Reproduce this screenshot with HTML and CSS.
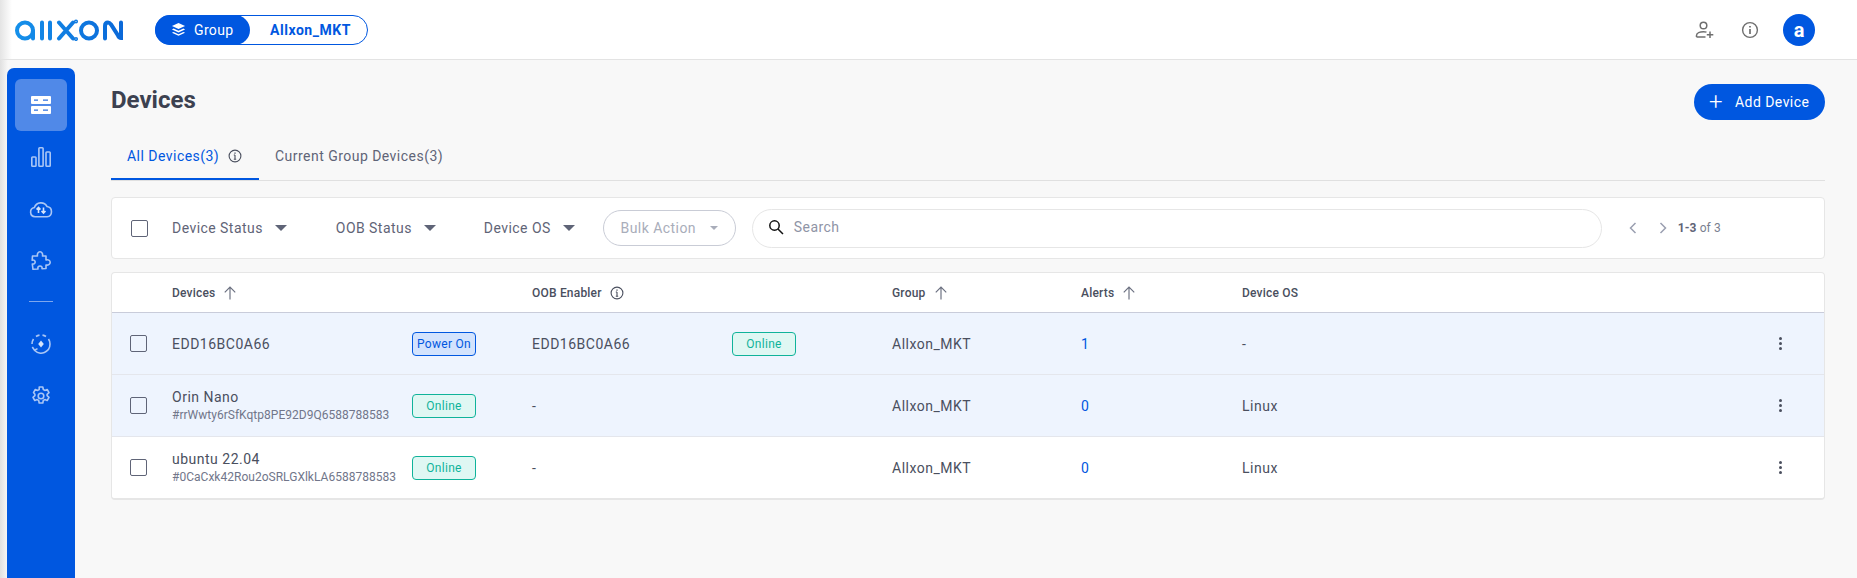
FILE: index.html
```html
<!DOCTYPE html>
<html lang="en">
<head>
    <meta charset="UTF-8">
    <title>Devices</title>
    <link rel="stylesheet" href="styles.css">
</head>
<body>
    <header class="top-bar">
        <svg class="logo" viewBox="0 0 108 22" fill="none" stroke="url(#logoFade)" stroke-width="4" stroke-linecap="round">
            <defs>
                <linearGradient id="logoFade" gradientUnits="userSpaceOnUse" x1="0" y1="0" x2="108" y2="0">
                    <stop offset="0" stop-color="#1590ea"/>
                    <stop offset="1" stop-color="#0a68d8"/>
                </linearGradient>
            </defs>
            <rect x="2" y="3.500" width="16" height="16" rx="8"/>
            <path d="M18 12v7.500M27 3.500v16M35 3.500v16"/>
            <path d="M44 3.500l14 16M58 3.500l-14 16"/>
            <circle cx="61" cy="2.500" r="1.300" stroke-width="1.500"/>
            <circle cx="61" cy="20" r="1.300" stroke-width="1.500"/>
            <rect x="66" y="3.500" width="16" height="16" rx="8"/>
            <path d="M90 19.500V7q0-3.500 3-3.500q1.500 0 3 2l7 11q1 2.500 3 2.500V3.500"/>
        </svg>
        <div class="group-pill">
            <div class="group-label">
                <svg class="group-icon" viewBox="0 0 16 16" fill="#fff"><path d="M8 1l7 3.200-7 3.200-7-3.200z"/><path d="M2.800 7l5.200 2.400L13.200 7 15 7.900l-7 3.200-7-3.200z"/><path d="M2.800 10.600L8 13l5.200-2.400 1.800.9L8 14.700 1 11.500z"/></svg>
                Group
            </div>
            <div class="group-name">Allxon_MKT</div>
        </div>
        <div class="top-actions">
            <svg class="top-icon" viewBox="0 0 20 20" fill="none" stroke="#6f6f6f" stroke-width="1.500"><circle cx="8.500" cy="5.500" r="3.300"/><path d="M1.500 17v-1.500c0-2.500 3.500-3.800 7-3.800 1 0 2 .1 3 .4M1.500 17h9M15 11.500v6.500M11.800 14.800h6.500"/></svg>
            <svg class="top-icon info-top" viewBox="0 0 20 20" fill="none" stroke="#6f6f6f" stroke-width="1.400"><circle cx="10" cy="10" r="7.400"/><path d="M10 9v5M10 6v1.400" stroke-width="1.700"/></svg>
            <div class="avatar">a</div>
        </div>
    </header>

    <div class="page">
        <nav class="side-nav">
            <div class="nav-item active">
                <svg viewBox="0 0 20 18" fill="#fff"><rect x="0" y="0" width="20" height="8" rx="1"/><rect x="0" y="10" width="20" height="8" rx="1"/><path d="M3 3.500h4v1.200H3zM12 3.500h5v1.200h-5zM3 13.500h4v1.200H3zM12 13.500h5v1.200h-5z" fill="#2f72e0"/></svg>
            </div>
            <div class="nav-item">
                <svg viewBox="0 0 20 20" fill="none" stroke="#a9c6f5" stroke-width="1.600"><rect x=".8" y="10" width="4.200" height="9.200" rx=".8"/><rect x="7.900" y=".8" width="4.200" height="18.400" rx=".8"/><rect x="15" y="5" width="4.200" height="14.200" rx=".8"/></svg>
            </div>
            <div class="nav-item">
                <svg class="wide" viewBox="0 0 24 18" fill="none" stroke="#a9c6f5" stroke-width="1.600"><path d="M6 16.800a4.700 4.700 0 0 1-.6-9.300A6.900 6.900 0 0 1 18 6.500a5.200 5.200 0 0 1 0 10.300z"/><path d="M9.500 13V7.500M7.500 9.500l2-2 2 2M14.500 7.500V13M12.500 11l2 2 2-2" stroke="#d5e4fb"/></svg>
            </div>
            <div class="nav-item">
                <svg viewBox="0 0 20 20" fill="none" stroke="#a9c6f5" stroke-width="1.600" stroke-linejoin="round"><path d="M1.500 5h5C6 3 7 .8 9 .8s3 2.200 2.500 4.200H15v4c2-.7 4.200.3 4.200 2.300S17 14.500 15 14v3.500l-4 .3c.4-1.700-.5-2.800-2-2.800s-2.500 1.200-2 3l-5 .3-.7-5.300c1.700.3 2.900-.6 2.900-2s-1.400-2.300-3-1.800z"/></svg>
            </div>
            <div class="nav-divider"></div>
            <div class="nav-item">
                <svg viewBox="0 0 20 20" fill="none" stroke="#a9c6f5" stroke-width="1.600"><path d="M1 10a9 9 0 0 1 1.500-5M5 2.500A9 9 0 0 1 8.500 1.100M11.500 1.100A9 9 0 0 1 15 2.500M17.500 5A9 9 0 0 1 19 10M19 10a9 9 0 0 1-15.500 6.300"/><path d="M1.300 13l2.200 3.300 3-1.700"/><path d="M10 6.500l2.800 3.500L10 13.500 7.200 10z" fill="#d5e4fb" stroke="none"/></svg>
            </div>
            <div class="nav-item">
                <svg viewBox="0 0 20 20" fill="none" stroke="#a9c6f5" stroke-width="1.600" stroke-linejoin="round"><circle cx="10" cy="10" r="2.800"/><path d="M8.200 1h3.600l.5 2.500 1.500.9 2.400-.9 1.800 3.100-1.900 1.700v1.400l1.900 1.700-1.800 3.100-2.400-.9-1.500.9-.5 2.500H8.200l-.5-2.500-1.500-.9-2.400.9-1.800-3.100 1.900-1.700V8.300L2.500 6.600l1.800-3.100 2.400.9 1.500-.9z"/></svg>
            </div>
        </nav>

        <main class="content">
            <div class="title-row">
                <h1>Devices</h1>
                <button class="add-button"><span class="plus">+</span>Add Device</button>
            </div>

            <div class="tabs">
                <div class="tab active">All Devices(3)
                    <svg class="info" viewBox="0 0 14 14" fill="none" stroke="#4a4f5e" stroke-width="1.100"><circle cx="7" cy="7" r="5.900"/><path d="M7 6v4.200M5.800 10.200h2.400M5.800 6h1.200"/><path d="M7 3.500v1.200" stroke-width="1.300"/></svg>
                </div>
                <div class="tab">Current Group Devices(3)</div>
            </div>

            <div class="filter-bar">
                <span class="check"></span>
                <div class="filter filter-status">Device Status <i class="caret"></i></div>
                <div class="filter filter-oob">OOB Status <i class="caret"></i></div>
                <div class="filter filter-os">Device OS <i class="caret"></i></div>
                <div class="bulk">Bulk Action <i class="caret small"></i></div>
                <div class="search">
                    <svg viewBox="0 0 16 16" fill="none" stroke="#111" stroke-width="1.500"><circle cx="6.500" cy="6.500" r="4.700"/><path d="M10 10l5 5"/></svg>
                    Search
                </div>
                <div class="pager">
                    <svg viewBox="0 0 10 14" fill="none" stroke="#9a9fb0" stroke-width="1.500"><path d="M7.500 2L2.500 7l5 5"/></svg>
                    <svg viewBox="0 0 10 14" fill="none" stroke="#9a9fb0" stroke-width="1.500"><path d="M2.500 2l5 5-5 5"/></svg>
                    <span class="count"><b>1-3</b> of 3</span>
                </div>
            </div>

            <div class="table">
                <div class="row head">
                    <span></span>
                    <div class="th">Devices <svg class="sort" viewBox="0 0 12 12" fill="none" stroke="#6b7080" stroke-width="1"><path d="M6 11.500V1M1.500 5.500L6 1l4.500 4.500"/></svg></div>
                    <span></span>
                    <div class="th">OOB Enabler <svg class="info" viewBox="0 0 14 14" fill="none" stroke="#4a4f5e" stroke-width="1.100"><circle cx="7" cy="7" r="5.900"/><path d="M7 6v4.200M5.800 10.200h2.400M5.800 6h1.200"/><path d="M7 3.500v1.200" stroke-width="1.300"/></svg></div>
                    <span></span>
                    <div class="th">Group <svg class="sort" viewBox="0 0 12 12" fill="none" stroke="#6b7080" stroke-width="1"><path d="M6 11.500V1M1.500 5.500L6 1l4.500 4.500"/></svg></div>
                    <div class="th">Alerts <svg class="sort" viewBox="0 0 12 12" fill="none" stroke="#6b7080" stroke-width="1"><path d="M6 11.500V1M1.500 5.500L6 1l4.500 4.500"/></svg></div>
                    <div class="th">Device OS</div>
                    <span></span>
                </div>

                <div class="row selected">
                    <span class="check"></span>
                    <div class="name">EDD16BC0A66</div>
                    <div><span class="badge power">Power On</span></div>
                    <div>EDD16BC0A66</div>
                    <div><span class="badge online">Online</span></div>
                    <div>Allxon_MKT</div>
                    <div class="alerts">1</div>
                    <div>-</div>
                    <div class="kebab"><i></i><i></i><i></i></div>
                </div>

                <div class="row selected">
                    <span class="check"></span>
                    <div class="name">Orin Nano<small>#rrWwty6rSfKqtp8PE92D9Q6588788583</small></div>
                    <div><span class="badge online">Online</span></div>
                    <div>-</div>
                    <span></span>
                    <div>Allxon_MKT</div>
                    <div class="alerts">0</div>
                    <div>Linux</div>
                    <div class="kebab"><i></i><i></i><i></i></div>
                </div>

                <div class="row">
                    <span class="check"></span>
                    <div class="name">ubuntu 22.04<small>#0CaCxk42Rou2oSRLGXlkLA6588788583</small></div>
                    <div><span class="badge online">Online</span></div>
                    <div>-</div>
                    <span></span>
                    <div>Allxon_MKT</div>
                    <div class="alerts">0</div>
                    <div>Linux</div>
                    <div class="kebab"><i></i><i></i><i></i></div>
                </div>
            </div>
        </main>
    </div>
</body>
</html>
```

FILE: styles.css
```css
* {
    box-sizing: border-box;
}

html, body {
    height: 100%;
}

body {
    margin: 0;
    background: #f8f8f8;
    font-family: "Roboto", sans-serif;
    font-size: 14px;
    color: #4a4f5e;
    overflow: hidden;
    display: flex;
    flex-direction: column;
}

.top-bar {
    height: 60px;
    flex: none;
    background: linear-gradient(90deg, #e4e4e4, #fff 12px);
    border-bottom: 1px solid #e3e3e3;
    display: flex;
    align-items: center;
    padding: 0 42px 0 15px;
}

.logo {
    width: 108px;
    height: 22px;
}

.group-pill {
    margin-left: 32px;
    width: 213px;
    height: 30px;
    border: 1px solid #0057e0;
    border-radius: 15px;
    display: flex;
    align-items: center;
    background: #fff;
}

.group-label {
    width: 95px;
    height: 30px;
    margin-left: -1px;
    background: #0057e0;
    border-radius: 15px;
    color: #fff;
    display: flex;
    align-items: center;
    gap: 8px;
    padding-left: 16px;
    letter-spacing: 0.35px;
}

.group-icon {
    width: 15px;
    height: 15px;
}

.group-name {
    flex: 1;
    padding-left: 4px;
    text-align: center;
    color: #0057e0;
    font-weight: 700;
    letter-spacing: 0.55px;
}

.top-actions {
    margin-left: auto;
    display: flex;
    align-items: center;
    gap: 23px;
}

.info-top {
    margin-left: 2px;
}

.top-icon {
    width: 20px;
    height: 20px;
}

.avatar {
    width: 32px;
    height: 32px;
    border-radius: 50%;
    background: #0057e0;
    color: #fff;
    font-size: 20px;
    font-weight: 700;
    display: flex;
    align-items: center;
    justify-content: center;
}

.page {
    flex: 1;
    display: flex;
    min-height: 0;
    background: linear-gradient(90deg, #e0e0e0, #f8f8f8 8px);
    padding-left: 7px;
    padding-top: 8px;
}

.side-nav {
    width: 68px;
    flex: none;
    background: #0057e0;
    border-radius: 7px 7px 0 0;
    padding-top: 11px;
    display: flex;
    flex-direction: column;
    align-items: center;
}

.nav-item {
    width: 52px;
    height: 52px;
    flex: none;
    border-radius: 6px;
    display: flex;
    align-items: center;
    justify-content: center;
}

.nav-item.active {
    background: #5089e8;
}

.nav-item svg {
    width: 20px;
    height: 20px;
}

.nav-item svg.wide {
    width: 24px;
    height: 18px;
}

.nav-divider {
    width: 24px;
    height: 1px;
    background: #7ea7ee;
    margin: 14px 0 16px;
    flex: none;
}

.content {
    flex: 1;
    padding: 16px 32px 0 36px;
    min-width: 0;
}

.title-row {
    display: flex;
    justify-content: space-between;
    align-items: center;
    height: 36px;
}

h1 {
    margin: 0;
    padding-bottom: 4px;
    font-size: 24px;
    font-weight: 700;
    color: #3c4150;
}

.add-button {
    width: 131px;
    height: 36px;
    border: none;
    border-radius: 18px;
    background: #0057e0;
    color: #fff;
    font-family: inherit;
    font-size: 14px;
    letter-spacing: 0.45px;
    display: flex;
    align-items: center;
    padding: 0 0 0 15px;
}

.plus {
    font-size: 24px;
    font-weight: 300;
    line-height: 20px;
    margin-right: 12px;
}

.tabs {
    display: flex;
    margin-top: 15px;
    height: 46px;
    border-bottom: 1px solid #e0e0e0;
}

.tab {
    padding: 0 16px 3px;
    height: 45px;
    display: flex;
    align-items: center;
    gap: 9px;
    letter-spacing: 0.47px;
    color: #5f6477;
}

.tab.active {
    color: #0057e0;
    border-bottom: 2px solid #0057e0;
    width: 148px;
    padding-bottom: 1px;
}

.info {
    width: 14px;
    height: 14px;
    flex: none;
}

.filter-bar {
    margin-top: 16px;
    height: 62px;
    background: #fff;
    border: 1px solid #e6e6e6;
    border-radius: 4px;
    display: flex;
    align-items: center;
    padding-left: 19px;
    color: #5f6477;
    letter-spacing: 0.45px;
}

.check {
    width: 17px;
    height: 17px;
    border: 1.5px solid #5f6477;
    border-radius: 2px;
    display: block;
    flex: none;
}

.filter {
    display: flex;
    align-items: center;
    gap: 12px;
}

.filter-status {
    margin-left: 24px;
}

.filter-oob {
    margin-left: 49px;
}

.filter-os {
    margin-left: 48px;
}

.caret {
    display: block;
    width: 0;
    height: 0;
    border-left: 6px solid transparent;
    border-right: 6px solid transparent;
    border-top: 6px solid #5f6477;
}

.caret.small {
    border-left-width: 4px;
    border-right-width: 4px;
    border-top-width: 4px;
    border-top-color: #a9adba;
}

.bulk {
    margin-left: 28px;
    width: 133px;
    height: 36px;
    border: 1px solid #c9ccd6;
    border-radius: 18px;
    display: flex;
    align-items: center;
    justify-content: center;
    gap: 14px;
    color: #a9adba;
}

.search {
    margin-left: 16px;
    width: 850px;
    height: 39px;
    border: 1px solid #e6e6e6;
    border-radius: 20px;
    display: flex;
    align-items: center;
    gap: 10px;
    padding: 0 0 2px 15px;
    color: #8f94a6;
}

.search svg {
    width: 16px;
    height: 16px;
}

.pager {
    margin-left: 26px;
    display: flex;
    align-items: center;
    gap: 20px;
}

.pager svg {
    width: 10px;
    height: 14px;
}

.count {
    font-size: 12px;
    margin-left: -10px;
    color: #7a7f90;
    letter-spacing: 0.1px;
}

.count b {
    color: #5f6477;
}

.table {
    margin-top: 13px;
    background: #fff;
    border: 1px solid #e6e6e6;
    border-bottom-width: 2px;
    border-radius: 4px;
}

.row {
    display: grid;
    grid-template-columns: 60px 240px 120px 200px 160px 189px 161px 1fr 88px;
    align-items: center;
    height: 62px;
    border-top: 1px solid #e4e6ec;
    letter-spacing: 0.5px;
    color: #4a4f5e;
}

.row > .check {
    margin-left: 18px;
}

.row.head {
    height: 40px;
    border-top: none;
    border-bottom: 1px solid #c9ccda;
}

.row.head + .row {
    border-top: none;
    height: 61px;
}

.row.selected {
    background: #eef4fe;
}

.th {
    font-size: 12px;
    font-weight: 500;
    display: flex;
    align-items: center;
    gap: 8px;
    letter-spacing: 0.2px;
}

.sort {
    width: 14px;
    height: 14px;
}

.name small {
    display: block;
    font-size: 12px;
    color: #71768a;
    margin-top: 3px;
    letter-spacing: 0.02px;
}

.badge {
    display: flex;
    align-items: center;
    justify-content: center;
    width: 64px;
    height: 24px;
    border-radius: 4px;
    font-size: 12px;
    letter-spacing: 0.3px;
}

.badge.online {
    border: 1px solid #0fb39a;
    background: #dff7f3;
    color: #0fb39a;
}

.badge.power {
    border: 1px solid #0057e0;
    background: #d3e3fd;
    color: #0057e0;
}

.alerts {
    color: #0057e0;
}

.kebab {
    display: flex;
    flex-direction: column;
    align-items: center;
    gap: 2px;
}

.kebab i {
    display: block;
    width: 3px;
    height: 3px;
    border-radius: 50%;
    background: #4a4f5e;
}
```
